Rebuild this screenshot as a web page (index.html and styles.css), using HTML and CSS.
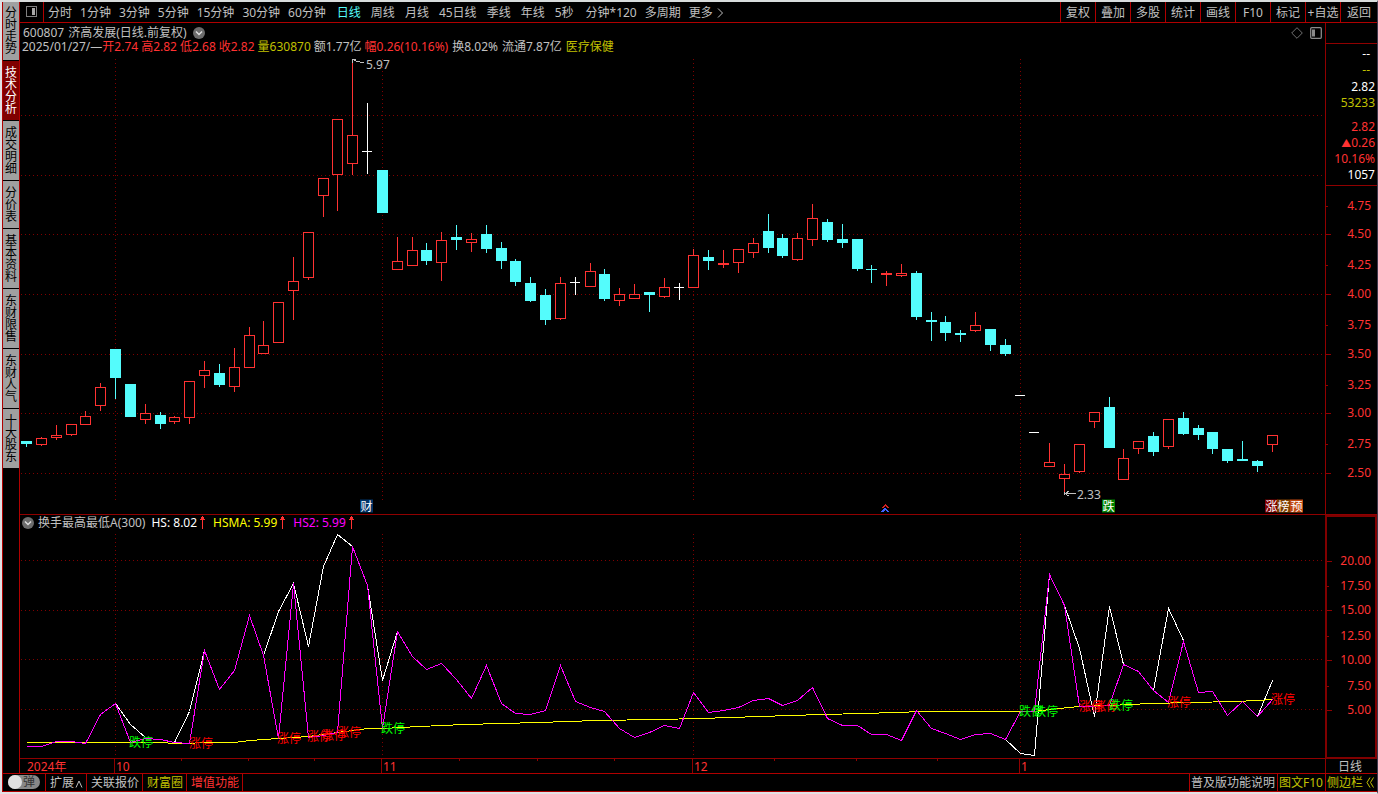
FILE: index.html
```html
<!DOCTYPE html>
<html lang="zh-CN">
<head>
<meta charset="utf-8">
<title>济高发展 600807</title>
<link rel="stylesheet" href="styles.css">
</head>
<body>
<div class="app">
  <nav class="side">
    <button class="tab">分时走势</button>
    <button class="tab active">技术分析</button>
    <button class="tab">成交明细</button>
    <button class="tab">分价表</button>
    <button class="tab">基本资料</button>
    <button class="tab">东财限售</button>
    <button class="tab">东财人气</button>
    <button class="tab">十大股东</button>
  </nav>

  <div class="content">
    <header class="toolbar">
      <button class="panel-toggle" aria-label="左侧面板">
        <svg width="13" height="12" viewBox="0 0 13 12" shape-rendering="crispEdges"><rect x="1.500" y=".5" width="10" height="10" fill="none" stroke="#808080"/><rect x="7" y="2" width="3" height="7" fill="#a8a8a8"/></svg>
      </button>
      <div class="periods minutes">
        <button>分时</button><button>1分钟</button><button>3分钟</button><button>5分钟</button><button>15分钟</button><button>30分钟</button><button>60分钟</button>
      </div>
      <div class="periods days">
        <button class="on">日线</button><button>周线</button><button>月线</button><button>45日线</button><button>季线</button><button>年线</button><button>5秒</button>
      </div>
      <div class="periods minutes">
        <button>分钟*120</button><button>多周期</button><button>更多<svg class="chev" width="8" height="10" viewBox="0 0 8 10"><path d="M2 .5 6.500 5 2 9.500" fill="none" stroke="#c0c0c0"/></svg></button>
      </div>
      <div class="tools">
        <button>复权</button><button>叠加</button><button>多股</button><button>统计</button><button>画线</button><button>F10</button><button>标记</button><button>+自选</button><button>返回</button>
      </div>
    </header>

    <main class="workspace">
      <section class="price">
        <div class="price-head">
          <div class="title">
            <span>600807</span><span>济高发展(日线.前复权)</span>
            <svg class="drop" width="12" height="12" viewBox="0 0 12 12"><circle cx="6" cy="6" r="6" fill="#6c6c6c"/><path d="M3 4.500 6 7.500 9 4.500" fill="none" stroke="#ddd" stroke-width="1.500"/></svg>
          </div>
          <div class="quote-line">
            <span class="day">2025/01/27/—</span><span class="red">开2.74</span><span class="red">高2.82</span><span class="red">低2.68</span><span class="red">收2.82</span><span class="gold">量630870</span><span>额1.77亿</span><span class="red">幅0.26(10.16%)</span><span class="wide">换8.02%</span><span class="wide">流通7.87亿</span><span class="gold wide">医疗保健</span>
          </div>
          <div class="corner">
            <svg width="12" height="12" viewBox="0 0 12 12"><path d="M6 .7 11.300 6 6 11.300 .7 6Z" fill="none" stroke="#707070"/></svg>
            <svg width="12" height="12" viewBox="0 0 12 12"><rect x=".7" y=".7" width="10.600" height="10.600" rx="1" fill="none" stroke="#8a8a8a" stroke-width="1.300"/><rect x="2" y="2.500" width="3" height="7" fill="#8a8a8a"/></svg>
          </div>
        </div>
        <div class="plot" id="price-plot"></div>
      </section>

      <aside class="quote">
        <div class="quote-top"></div>
        <div class="quote-values">
          <div class="dash white">--</div>
          <div class="dash gold">--</div>
          <div class="white">2.82</div>
          <div class="gold">53233</div>
          <div class="red break">2.82</div>
          <div class="red"><span class="arrow">▲</span>0.26</div>
          <div class="red">10.16%</div>
          <div class="white">1057</div>
        </div>
        <div class="axis" id="price-axis"></div>
      </aside>

      <section class="indicator">
        <div class="ind-head">
          <svg class="drop" width="12" height="12" viewBox="0 0 12 12"><circle cx="6" cy="6" r="6" fill="#6c6c6c"/><path d="M3 4.500 6 7.500 9 4.500" fill="none" stroke="#ddd" stroke-width="1.500"/></svg>
          <span class="ind-name">换手最高最低A(300)</span>
          <span class="white">HS: 8.02<svg class="up" width="5" height="13" viewBox="0 0 5 13"><path d="M2 0h1v1h1v2h1v1H3v9H2V4H0V3h1V1h1Z" fill="#ff3232"/></svg></span>
          <span class="yellow">HSMA: 5.99<svg class="up" width="5" height="13" viewBox="0 0 5 13"><path d="M2 0h1v1h1v2h1v1H3v9H2V4H0V3h1V1h1Z" fill="#ff3232"/></svg></span>
          <span class="magenta">HS2: 5.99<svg class="up" width="5" height="13" viewBox="0 0 5 13"><path d="M2 0h1v1h1v2h1v1H3v9H2V4H0V3h1V1h1Z" fill="#ff3232"/></svg></span>
        </div>
        <div class="plot" id="ind-plot"></div>
      </section>

      <div class="axis ind-axis" id="ind-axis"></div>

      <div class="dates" id="dates"></div>
      <div class="date-unit">日线</div>
    </main>
  </div>

  <footer class="status">
    <label class="switch"><input type="checkbox"><span class="knob"></span>弹</label>
    <button class="cell expand">扩展<svg width="8" height="8" viewBox="0 0 8 8"><path d="M1 7.500 4 1 7 7.500" fill="none" stroke="#c0c0c0"/></svg></button>
    <a class="cell" href="#">关联报价</a>
    <a class="cell gold" href="#">财富圈</a>
    <a class="cell red last" href="#">增值功能</a>
    <span class="fill"></span>
    <a class="foot" href="#">普及版功能说明</a>
    <a class="foot gold" href="#">图文F10</a>
    <button class="foot gold side-toggle">侧边栏<svg width="8" height="11" viewBox="0 0 8 11"><path d="M4 .5 1 5.500 4 10.500M7.500 .5 4.500 5.500 7.500 10.500" fill="none" stroke="#c0c000"/></svg></button>
  </footer>
</div>
<script src="chart.js"></script>
</body>
</html>
```

FILE: styles.css
```css
* { box-sizing: border-box; }

body {
  margin: 0;
  background: #000;
  color: #c0c0c0;
  font-family: "Noto Sans", "Noto Sans CJK SC", sans-serif;
  font-size: 12px;
  line-height: 14px;
}

button {
  padding: 0;
  border: 0;
  background: none;
  color: inherit;
  font: inherit;
  white-space: nowrap;
}

a { color: inherit; text-decoration: none; }
svg { flex: none; }

.red { color: #ff3232; }
.gold { color: #c0c000; }
.white { color: #fff; }
.yellow { color: #ff0; }
.magenta { color: #f0f; }

.app {
  display: grid;
  grid-template-columns: 18px minmax(0, 1fr);
  grid-template-rows: minmax(0, 1fr) 19px;
  height: 100vh;
  border-top: 2px solid #d8dcdc;
  border-bottom: 2px solid #e4e0e4;
  border-left: 2px solid #e0e0e4;
  border-right: 1px solid #40384c;
}

/* left tabs */
.side {
  display: flex;
  flex-direction: column;
  border-left: 1px solid #b00000;
  border-right: 1px solid #b00000;
}
.tab {
  padding: 6px 2px 5px;
  border-bottom: 1px solid #000;
  background: #a0a0a0;
  color: #000;
  line-height: 12px;
  white-space: normal;
  word-break: break-all;
}
.tab:first-child { padding-top: 5px; }
.tab.active { background: #800000; color: #fff; }

.content { display: flex; flex-direction: column; min-height: 0; }

/* top toolbar */
.toolbar {
  display: flex;
  flex: none;
  height: 21px;
  border-bottom: 1px solid #b00000;
}
.panel-toggle {
  display: flex;
  align-items: center;
  justify-content: center;
  width: 24px;
  margin-right: 4px;
  border-right: 1px solid #b00000;
}
.periods { display: flex; }
.minutes { gap: 8px; margin-right: 11px; }
.days { gap: 10px; margin-right: 12px; }
.periods button, .tools button { padding-top: 2px; }
.periods .on { color: #54fcfc; }
.chev { margin-left: 3px; vertical-align: -1px; }
.tools { display: flex; margin-left: auto; }
.tools button { width: 35px; border-left: 1px solid #b00000; }
.tools button:last-child { width: 37px; }

/* chart area */
.workspace {
  flex: 1;
  min-height: 0;
  display: grid;
  grid-template-columns: minmax(0, 1fr) 52px;
  grid-template-rows: minmax(0, 492fr) minmax(0, 244fr) 14px;
}
.price, .indicator {
  display: flex;
  flex-direction: column;
  min-height: 0;
  border-bottom: 1px solid #900000;
}
.price-head { position: relative; flex: none; height: 31px; padding: 3px 2px 0; }
.title { display: flex; align-items: center; gap: 4px; height: 14px; padding-left: 1px; }
.title .drop { margin-left: 2px; }
.quote-line { display: flex; gap: 3px; white-space: nowrap; }
.quote-line .day { margin-right: -3px; }
.quote-line .wide { margin-left: 1px; }
.corner { position: absolute; top: 4px; right: 3px; display: flex; gap: 7px; }

.plot { position: relative; flex: 1; min-height: 0; }
.plot svg.layer { position: absolute; inset: 0; width: 100%; height: 100%; }
.layer * { vector-effect: non-scaling-stroke; }
.mark { position: absolute; transform: translateY(-50%); white-space: nowrap; line-height: 12px; }
.mark-red { color: #f00; }
.mark-green { color: #0f0; }
.badge { width: 13px; height: 13px; line-height: 13px; text-align: center; color: #fff; }
.badge-navy { background: #003468; }
.badge-green { background: #008000; }
.badge-red { background: #800000; }
.badge-brown { background: #804000; }
.badge-orange { background: #c04810; }

.grid-line { stroke: #800000; stroke-dasharray: 1 3; fill: none; }
.up-bar { stroke: #ff3232; fill: #000; }
.up-wick { stroke: #ff3232; }
.down-bar { fill: #54fcfc; }
.down-wick { stroke: #54fcfc; }
.flat { stroke: #fff; }
.series { fill: none; }
.s-white { stroke: #fff; }
.s-yellow { stroke: #ff0; }
.s-magenta { stroke: #f0f; }
.note { stroke: #c0c0c0; fill: none; }

/* quote column */
.quote {
  display: flex;
  flex-direction: column;
  border-left: 1px solid #900000;
  border-bottom: 1px solid #900000;
}
.quote-top { height: 21px; border-bottom: 1px solid #900000; }
.quote-values {
  padding: 2px 2px 2px 0;
  border-bottom: 1px solid #900000;
  line-height: 16px;
  text-align: right;
}
.quote-values > div { height: 16px; }
.quote-values .dash { padding-right: 5px; }
.quote-values .break { margin-top: 8px; }
.quote-values .gold + .white { margin-top: 1px; }
.arrow { font-size: 10px; }
.axis { position: relative; flex: 1; }
.tick { position: absolute; left: 0; width: 5px; height: 1px; background: #900000; }
.tick.minor { width: 2px; }
.tick-label { position: absolute; right: 6px; transform: translateY(-50%); color: #ff3232; }

/* indicator */
.ind-head {
  display: flex;
  align-items: center;
  gap: 8px;
  flex: none;
  height: 17px;
  padding: 0 0 2px 2px;
}
.ind-name { margin: 0 -2px 0 -4px; }
.up { margin-left: 3px; vertical-align: -2px; }
.ind-axis { border: 2px solid #800000; }
.ind-axis .tick-label { right: 4px; }

.dates { position: relative; }
.date { position: absolute; top: 0; height: 14px; padding-left: 1px; border-left: 1px solid #900000; color: #ff3232; line-height: 16px; }
.date.first { border-left-color: transparent; }
.date-tick { position: absolute; top: 0; width: 1px; height: 2px; background: #900000; }
.date-unit { padding-left: 12px; border-left: 1px solid #900000; line-height: 16px; }

/* bottom bar */
.status {
  grid-column: 1 / -1;
  display: flex;
  border-top: 1px solid #b00000;
  border-bottom: 1px solid #b00000;
  border-left: 1px solid #b00000;
  line-height: 17px;
}
.switch {
  position: relative;
  width: 32px;
  height: 14px;
  margin: 1px 5px 0;
  padding-right: 5px;
  border-radius: 7px;
  background: #888;
  color: #333;
  line-height: 14px;
  text-align: right;
}
.switch input { position: absolute; inset: 0; margin: 0; opacity: 0; }
.knob { position: absolute; left: 0; top: 0; width: 14px; height: 14px; border-radius: 7px; background: #e0e0e0; }
.cell, .foot { border-left: 1px solid #b00000; white-space: nowrap; }
.cell { padding: 0 3px 0 4px; }
.cell.last { border-right: 1px solid #b00000; }
.cell svg { margin-left: 1px; vertical-align: -1px; }
.fill { flex: 1; }
.foot { padding: 0 2px 0 1px; }
.side-toggle { width: 52px; text-align: left; }
.side-toggle svg { margin-left: 3px; vertical-align: -1px; }
```

FILE: chart.js
```js
// Candle: [x, high, top, bottom, low, kind]  u = up, d = down, f = flat
const candles = [
  [26,441,441,444,447,'d'],[41,437,438,445,446,'u'],[56,425,435,438,440,'u'],[71,424,424,435,436,'u'],
  [85,411,416,425,425,'u'],[100,383,387,406,411,'u'],[115,349,349,378,399,'d'],[130,384,384,417,417,'d'],
  [145,404,413,420,424,'u'],[160,412,415,424,429,'d'],[174,416,417,422,424,'u'],[189,381,381,418,424,'u'],
  [204,361,370,376,388,'u'],[219,364,373,385,387,'d'],[234,348,367,387,392,'u'],[249,327,335,368,368,'u'],
  [263,321,345,354,354,'u'],[278,302,302,343,343,'u'],[293,257,281,291,320,'u'],[308,232,232,278,280,'u'],
  [323,178,178,196,217,'u'],[337,119,119,175,211,'u'],[352,62,135,164,175,'u'],[367,103,151,152,174,'f'],
  [382,170,170,213,213,'d'],[397,237,261,270,270,'u'],[412,237,250,266,266,'u'],[426,243,250,261,265,'d'],
  [441,232,240,263,281,'u'],[456,225,237,240,250,'d'],[471,233,239,243,252,'u'],[486,225,234,249,253,'d'],
  [501,242,248,261,269,'d'],[515,259,261,282,286,'d'],[530,277,283,301,302,'d'],[545,289,295,320,325,'d'],
  [560,277,283,319,320,'u'],[575,277,282,283,295,'f'],[590,263,271,287,287,'u'],[604,269,274,299,301,'d'],
  [619,288,294,301,306,'u'],[634,284,294,299,299,'u'],[649,292,292,295,312,'d'],[664,278,287,297,298,'u'],
  [679,283,287,288,300,'f'],[693,249,255,288,288,'u'],[708,250,257,261,270,'d'],[723,250,263,265,268,'u'],
  [738,249,249,263,273,'u'],[753,238,243,253,258,'u'],[768,214,231,248,253,'d'],[782,234,238,256,258,'d'],
  [797,233,238,260,261,'u'],[812,204,218,240,246,'u'],[827,219,222,240,242,'d'],[842,224,239,243,248,'d'],
  [857,239,239,269,271,'d'],[871,265,269,270,283,'d'],[886,271,273,275,286,'u'],[901,264,273,276,277,'u'],
  [916,271,273,317,320,'d'],[931,312,320,322,341,'d'],[945,316,322,333,341,'d'],[960,330,333,335,342,'d'],
  [975,312,325,331,332,'u'],[990,329,329,345,351,'d'],[1005,339,345,354,356,'d'],[1020,395,395,396,396,'f'],
  [1034,432,432,433,433,'f'],[1049,443,462,467,467,'u'],[1064,464,474,479,492,'u'],[1079,444,444,472,473,'u'],
  [1094,412,412,422,428,'u'],[1109,397,407,448,448,'d'],[1123,449,458,480,480,'u'],[1138,441,441,449,454,'u'],
  [1153,432,436,452,456,'d'],[1168,419,419,447,449,'u'],[1183,412,418,434,435,'d'],[1198,425,428,435,440,'d'],
  [1212,432,432,449,454,'d'],[1227,449,449,461,463,'d'],[1242,441,459,461,461,'d'],[1257,460,461,466,472,'d'],
  [1272,435,435,445,452,'u']
];

const hs2 = [746,746,741,741,743,714,703,742,738,739,742,743,650,689,670,615,655,738,583,737,735,732,546,585,728,
  631,656,669,663,679,698,665,703,713,714,710,665,701,707,711,728,737,732,725,728,692,712,710,707,700,698,705,700,
  687,718,725,725,734,734,740,710,728,733,739,734,733,739,711,711,574,605,706,706,705,664,671,690,702,641,692,691,
  715,701,716,699].map((y, i) => [candles[i][0], y]);
const hs = [
  [[115,703],[130,724],[145,737]],
  [[174,742],[189,711],[204,650]],
  [[263,655],[278,611],[293,583],[308,646],[323,566],[337,534],[352,546]],
  [[367,585],[382,680],[397,631]],
  [[1005,739],[1020,753],[1034,755],[1049,574]],
  [[1064,605],[1079,648],[1094,716],[1109,606],[1123,664]],
  [[1153,690],[1168,608],[1183,640]],
  [[1257,716],[1272,680]]
];
const hsma = [[26,742],[160,742],[174,743],[189,743],[200,742],[234,742],[249,740],[278,738],[308,736],[337,732],
  [367,728],[382,728],[419,726],[464,724],[538,722],[596,720],[657,719],[700,718],[760,716],[821,714],[864,713],
  [924,711],[1034,711],[1049,709],[1079,706],[1109,705],[1150,703],[1190,702],[1235,701],[1257,700],[1272,699]];

const months = [115, 382, 693, 1020];
const P = { x: 20, y: 54, w: 1305, h: 460 };
const I = { x: 20, y: 532, w: 1305, h: 226 };

const line = (x1, y1, x2, y2, c) => `<line class="${c}" x1="${x1}" y1="${y1}" x2="${x2}" y2="${y2}"/>`;
const poly = (pts, c) => `<polyline class="series ${c}" points="${pts.map(p => (p[0] + .5) + ',' + (p[1] + .5)).join(' ')}"/>`;
const layer = (b, body) => `<svg class="layer" viewBox="${b.x} ${b.y} ${b.w} ${b.h}" preserveAspectRatio="none" shape-rendering="crispEdges">${body}</svg>`;
const mark = (b, x, y, text, c) =>
  `<span class="mark ${c}" style="left:${(x - b.x) / b.w * 100}%;top:${(y - b.y) / b.h * 100}%">${text}</span>`;

function grid(rows, top, bottom) {
  return rows.map(y => line(21, y + .5, 1323, y + .5, 'grid-line')).join('') +
    months.map(x => line(x + .5, top, x + .5, bottom, 'grid-line')).join('');
}

function candle([x, hi, top, bot, lo, kind]) {
  const cx = x + .5;
  if (kind === 'f') {
    return (lo > hi + 1 ? line(cx, hi, cx, lo, 'flat') : '') + line(x - 5, top + .5, x + 5, top + .5, 'flat');
  }
  if (kind === 'd') {
    return line(cx, hi, cx, lo, 'down-wick') +
      `<rect class="down-bar" x="${x - 5}" y="${top}" width="11" height="${bot - top}"/>`;
  }
  return (hi < top ? line(cx, hi, cx, top, 'up-wick') : '') + (lo > bot ? line(cx, bot, cx, lo, 'up-wick') : '') +
    `<rect class="up-bar" x="${x - 4.5}" y="${top + .5}" width="10" height="${bot - top - 1}"/>`;
}

document.getElementById('price-plot').innerHTML =
  layer(P, grid([115,175,234,294,354,413,473], 59, 500) + candles.map(candle).join('') +
    '<path class="note" d="M352.500 63V60M352 59.500H356M354 60.500H356M356 61.500H360M360 62.500H364"/>' +
    '<path class="note" d="M1064.500 492V495M1065 493.500H1076M1066 492.500H1068M1067 491.500H1069M1066 494.500H1067M1067 495.500H1069"/>' +
    '<path d="M885 504l4 4h-2l-2-2-2 2h-2z" fill="#d02020"/><path d="M885 507l4 5h-2l-2-2-2 2h-2z" fill="#4060ff"/>') +
  mark(P, 366, 65, '5.97', '') + mark(P, 1077, 495, '2.33', '') +
  mark(P, 360, 506, '财', 'badge badge-navy') + mark(P, 1102, 506, '跌', 'badge badge-green') +
  mark(P, 1265, 506, '涨', 'badge badge-red') + mark(P, 1277, 506, '榜', 'badge badge-brown') +
  mark(P, 1290, 506, '预', 'badge badge-orange');

document.getElementById('ind-plot').innerHTML =
  layer(I, grid([560,610,659,709], 534, 756) + hs.map(s => poly(s, 's-white')).join('') +
    poly(hsma, 's-yellow') + poly(hs2, 's-magenta')) +
  [[129,743,0],[189,744,1],[277,739,1],[307,737,1],[322,736,1],[337,733,1],[381,729,0],[1079,707,1],[1094,707,1],
   [1019,712,0],[1034,712,0],[1109,706,0],[1167,703,1],[1271,700,1]]
    .map(([x, y, up]) => mark(I, x, y, up ? '涨停' : '跌停', up ? 'mark-red' : 'mark-green')).join('');

// Each label: [text, y, minor]
const ticks = (list, top, h) => list.map(([text, y, minor]) => {
  const pos = (y - top) / h * 100;
  return `<i class="tick${minor ? ' minor' : ''}" style="top:${pos}%"></i><span class="tick-label" style="top:${pos}%">${text}</span>`;
}).join('');

document.getElementById('price-axis').innerHTML = ticks([['4.75',206,1],['4.50',234],['4.25',265,1],['4.00',294],
  ['3.75',325,1],['3.50',354],['3.25',385,1],['3.00',413],['2.75',444,1],['2.50',473]], 186, 328);
document.getElementById('ind-axis').innerHTML = ticks([['20.00',561],['17.50',586,1],['15.00',610],['12.50',636,1],
  ['10.00',660],['7.50',686,1],['5.00',710]], 517, 240);

const atX = x => `left:${(x - 20) / 1305 * 100}%`;
document.getElementById('dates').innerHTML =
  [[25,'2024年'],[114,'10'],[381,'11'],[692,'12'],[1019,'1']]
    .map(([x, t], i) => `<span class="date${i ? '' : ' first'}" style="${atX(x)}">${t}</span>`).join('') +
  [181,248,314,459,537,614,774,856,937].map(x => `<i class="date-tick" style="${atX(x)}"></i>`).join('');
```
